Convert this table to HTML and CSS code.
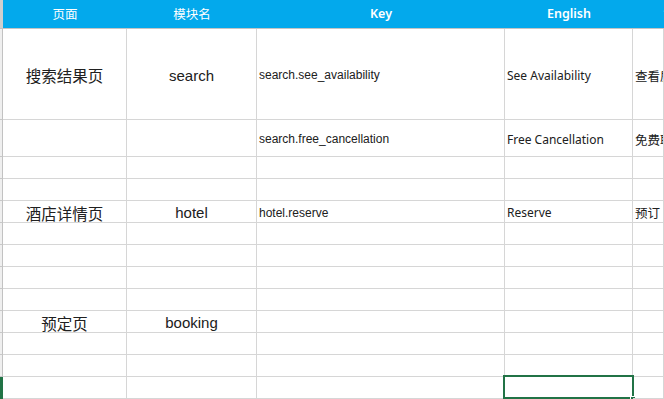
FILE: index.html
```html
<!DOCTYPE html>
<html lang="zh-CN">
<head>
<meta charset="utf-8">
<title>多语言表</title>
<link rel="stylesheet" href="styles.css">
</head>
<body>
<div class="sheet">
  <div class="row head">
    <div class="gut"></div>
    <div class="cell hc cjk">页面</div>
    <div class="cell hc cjk">模块名</div>
    <div class="cell hc lat">Key</div>
    <div class="cell hc lat">English</div>
    <div class="cell hc cjk last-h">简体中文</div>
  </div>
  <div class="row r-tall">
    <div class="gut"></div>
    <div class="cell c-page">搜索结果页</div>
    <div class="cell c-mod">search</div>
    <div class="cell c-key">search.see_availability</div>
    <div class="cell c-en">See Availability</div>
    <div class="cell c-zh">查看房态</div>
  </div>
  <div class="row r-mid">
    <div class="gut"></div>
    <div class="cell c-page"></div>
    <div class="cell c-mod"></div>
    <div class="cell c-key">search.free_cancellation</div>
    <div class="cell c-en">Free Cancellation</div>
    <div class="cell c-zh">免费取消</div>
  </div>
  <div class="row"><div class="gut"></div><div class="cell"></div><div class="cell"></div><div class="cell"></div><div class="cell"></div><div class="cell"></div></div>
  <div class="row"><div class="gut"></div><div class="cell"></div><div class="cell"></div><div class="cell"></div><div class="cell"></div><div class="cell"></div></div>
  <div class="row">
    <div class="gut"></div>
    <div class="cell c-page">酒店详情页</div>
    <div class="cell c-mod">hotel</div>
    <div class="cell c-key">hotel.reserve</div>
    <div class="cell c-en">Reserve</div>
    <div class="cell c-zh">预订</div>
  </div>
  <div class="row"><div class="gut"></div><div class="cell"></div><div class="cell"></div><div class="cell"></div><div class="cell"></div><div class="cell"></div></div>
  <div class="row"><div class="gut"></div><div class="cell"></div><div class="cell"></div><div class="cell"></div><div class="cell"></div><div class="cell"></div></div>
  <div class="row"><div class="gut"></div><div class="cell"></div><div class="cell"></div><div class="cell"></div><div class="cell"></div><div class="cell"></div></div>
  <div class="row"><div class="gut"></div><div class="cell"></div><div class="cell"></div><div class="cell"></div><div class="cell"></div><div class="cell"></div></div>
  <div class="row">
    <div class="gut"></div>
    <div class="cell c-page">预定页</div>
    <div class="cell c-mod">booking</div>
    <div class="cell"></div>
    <div class="cell"></div>
    <div class="cell"></div>
  </div>
  <div class="row"><div class="gut"></div><div class="cell"></div><div class="cell"></div><div class="cell"></div><div class="cell"></div><div class="cell"></div></div>
  <div class="row"><div class="gut"></div><div class="cell"></div><div class="cell"></div><div class="cell"></div><div class="cell"></div><div class="cell"></div></div>
  <div class="row r-sel">
    <div class="gut gut-sel"></div>
    <div class="cell"></div>
    <div class="cell"></div>
    <div class="cell"></div>
    <div class="cell selected"><span class="sel-box"></span><span class="sel-handle"></span></div>
    <div class="cell"></div>
  </div>
</div>
</body>
</html>
```

FILE: styles.css
```css
* { box-sizing: border-box; }
html, body { margin: 0; padding: 0; background: #fff; overflow: hidden; }
body { width: 664px; height: 399px; }

.sheet { width: 664px; }

.row {
  display: grid;
  grid-template-columns: 3px 124px 130px 248px 128px 1fr;
  height: 22px;
}
.row.head { height: 29px; }
.row.r-tall { height: 91px; }
.row.r-mid { height: 37px; }

.gut {
  background: #efefef;
  border-right: 1px solid #c2c2c2;
  border-bottom: 1px solid #c8c8c8;
}
.gut-sel { background: #217346; border-right-color: #217346; border-bottom: none; }
.head .gut { background: #cfcfcf; border-right: none; border-bottom: 1px solid #c2c2c2; }

.cell {
  border-right: 1px solid #d6d6d6;
  border-bottom: 1px solid #d6d6d6;
  display: flex;
  align-items: center;
  overflow: hidden;
  white-space: nowrap;
  color: #202020;
  position: relative;
  padding-top: 2px;
}
.head .cell {
  background: #03a9ec;
  border-right: none;
  border-bottom: 1px solid #c4c4c4;
  color: #fff;
  justify-content: center;
  padding-top: 0;
  padding-bottom: 1px;
}
.hc.cjk { font-family: "Noto Sans CJK SC", sans-serif; font-size: 12.5px; font-weight: 400; }
.hc.lat { font-family: "Noto Sans", "Open Sans", sans-serif; font-size: 12.5px; font-weight: 600; }
.head .last-h { justify-content: flex-start; padding-left: 30px; }

.c-page {
  justify-content: center;
  font-family: "Noto Sans CJK SC", sans-serif;
  font-size: 15.5px;
}
.c-mod {
  justify-content: center;
  font-family: "Liberation Sans", Arial, sans-serif;
  font-size: 15px;
}
.c-key {
  padding-left: 2px;
  font-family: "Liberation Sans", Arial, sans-serif;
  font-size: 12px;
}
.c-en {
  padding-left: 2px;
  font-family: "Noto Sans", "Open Sans", sans-serif;
  font-size: 12px;
}
.c-zh {
  padding-left: 2px;
  font-family: "Noto Sans CJK SC", sans-serif;
  font-size: 12.5px;
}

.selected { overflow: visible; }
.sel-box {
  position: absolute;
  left: -2px;
  top: -2px;
  right: -2px;
  bottom: -1px;
  border: 2px solid #217346;
}
.sel-handle {
  position: absolute;
  right: -4px;
  bottom: -3px;
  width: 6px;
  height: 5px;
  background: #217346;
  border: 1px solid #fff;
}
```
